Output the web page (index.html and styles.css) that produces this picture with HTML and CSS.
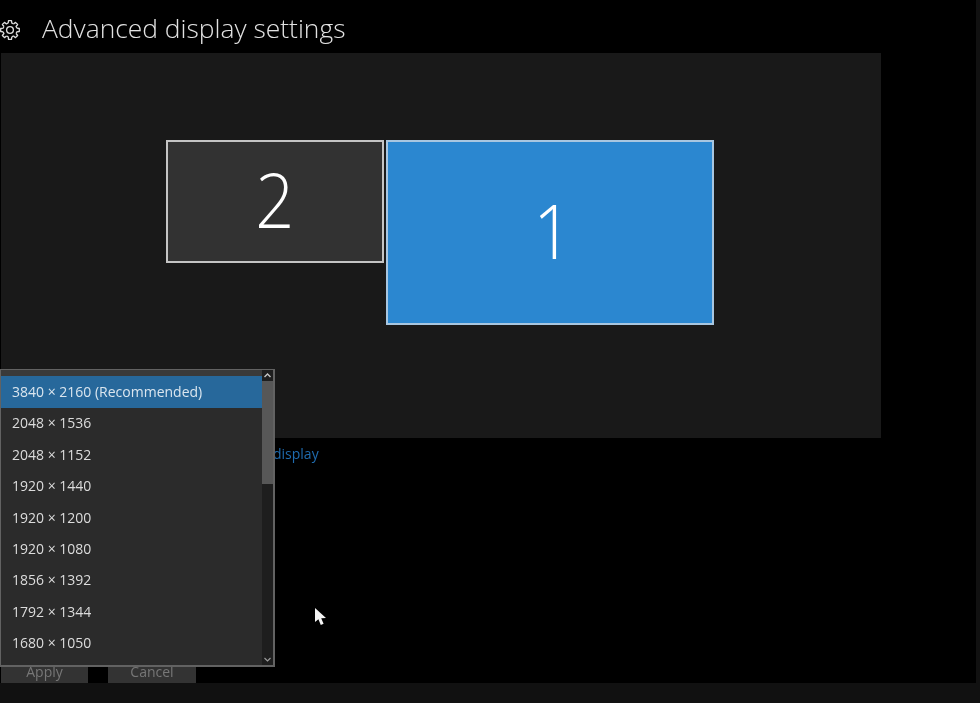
FILE: index.html
```html
<!DOCTYPE html>
<html lang="en">
<head>
<meta charset="utf-8">
<title>Advanced display settings</title>
<link rel="stylesheet" href="styles.css">
</head>
<body>
<div class="screen">
  <div class="upper">
    <main class="content">
      <header class="header">
        <svg class="gear" width="20" height="20" viewBox="-10 -10 20 20" aria-hidden="true">
          <defs><path id="tooth" d="M-1.81 -6.76L-1.49 -9.3L1.49 -9.3L1.81 -6.76A7 7 0 0 1 3.5 -6.06"/></defs>
          <g fill="none" stroke="#dcdcdc" stroke-width="1.3" stroke-linejoin="round">
            <use href="#tooth"/>
            <use href="#tooth" transform="rotate(45)"/>
            <use href="#tooth" transform="rotate(90)"/>
            <use href="#tooth" transform="rotate(135)"/>
            <use href="#tooth" transform="rotate(180)"/>
            <use href="#tooth" transform="rotate(225)"/>
            <use href="#tooth" transform="rotate(270)"/>
            <use href="#tooth" transform="rotate(315)"/>
            <circle r="3.4"/>
          </g>
        </svg>
        <h1 class="title">Advanced display settings</h1>
      </header>
      <section class="arrangement">
        <div class="monitor monitor-two"><span class="digit">2</span></div>
        <div class="monitor monitor-one"><span class="digit digit-one">1</span></div>
      </section>
      <div class="link-row"><a class="link">display</a></div>
      <div class="actions">
        <button class="btn">Apply</button>
        <button class="btn">Cancel</button>
      </div>
    </main>
    <div class="edge"></div>
  </div>
  <div class="footer"></div>

  <div class="dropdown">
    <div class="dropdown-lip"></div>
    <div class="dropdown-body">
      <ul class="options">
        <li class="option selected">3840 × 2160 (Recommended)</li>
        <li class="option">2048 × 1536</li>
        <li class="option">2048 × 1152</li>
        <li class="option">1920 × 1440</li>
        <li class="option">1920 × 1200</li>
        <li class="option">1920 × 1080</li>
        <li class="option">1856 × 1392</li>
        <li class="option">1792 × 1344</li>
        <li class="option">1680 × 1050</li>
      </ul>
      <div class="scrollbar">
        <svg class="arrow" width="11" height="11" viewBox="0 0 11 11" aria-hidden="true"><path d="M2.5 7L5.5 4L8.5 7" fill="none" stroke="#c4c4c4" stroke-width="1.4"/></svg>
        <div class="thumb"></div>
        <div class="track"></div>
        <svg class="arrow" width="11" height="11" viewBox="0 0 11 11" aria-hidden="true"><path d="M2.5 4L5.5 7L8.5 4" fill="none" stroke="#9a9a9a" stroke-width="1.2"/></svg>
      </div>
    </div>
  </div>

  <svg class="cursor" width="14" height="20" viewBox="0 0 14 20" aria-hidden="true"><path d="M1 1L1 15L4.4 12.2L6.8 18L9.6 16.8L7.2 11.2L12 11Z" fill="#f4f4f4"/></svg>
</div>
</body>
</html>
```
FILE: styles.css
```css
* { box-sizing: border-box; }
html, body { margin: 0; padding: 0; background: #000; }
body { width: 980px; height: 703px; overflow: hidden; font-family: "Open Sans", "Liberation Sans", sans-serif; }
.screen { position: relative; width: 980px; height: 703px; display: flex; flex-direction: column; filter: blur(0.4px); }
.upper { flex: 1; display: flex; min-height: 0; }
.content { flex: 1; display: flex; flex-direction: column; min-width: 0; }
.edge { width: 4px; background: #111; }
.footer { height: 20px; background: #111; }

.header { height: 53px; display: flex; align-items: center; gap: 22px; }
.gear { flex: none; margin-top: 6px; }
.title { margin: 3px 0 0; font-size: 26.4px; font-weight: 300; color: #e2e2e2; white-space: nowrap; line-height: 34px; }

.arrangement { position: relative; width: 880px; height: 385px; margin-left: 1px; background: #191919; }
.monitor { position: absolute; display: flex; align-items: center; justify-content: center; border: 2px solid #c4c4c4; color: #fff; }
.monitor-two { left: 165px; top: 87px; width: 218px; height: 123px; background: #323232; }
.monitor-one { left: 385px; top: 87px; width: 328px; height: 185px; background: #2b87d0; border-color: #a8c6e0; }
.digit { font-size: 76px; font-weight: 300; line-height: 1; margin-bottom: 6px; transform: scaleX(0.9); }
.digit-one { margin-left: 5px; }

.link-row { padding: 4px 0 0 273px; height: 32px; }
.link { font-size: 14px; line-height: 20px; color: #1f6cb0; }

.actions { margin-top: auto; display: flex; gap: 20px; padding-left: 1px; }
.btn { width: 87px; height: 28px; border: 0; padding: 5px 0 0; background: #333; color: #777; font: 14px/20px "Open Sans", "Liberation Sans", sans-serif; }
.btn + .btn { width: 88px; }

.dropdown { position: absolute; left: 0; top: 369px; width: 275px; height: 298px; display: flex; flex-direction: column; background: #2b2b2b; border: 1px solid #626262; border-width: 1px 2px 2px 1px; }
.dropdown-lip { height: 7px; background: #3a3a3a; }
.dropdown-body { flex: 1; display: flex; min-height: 0; }
.options { flex: 1; margin: -1px 0 0; padding: 0; list-style: none; min-width: 0; overflow: hidden; }
.option { height: 31.4px; line-height: 29.4px; padding-left: 11px; font-size: 14px; color: #dcdcdc; white-space: nowrap; }
.selected { height: 32.4px; padding-top: 1px; background: #27689b; color: #dbe6ef; }

.scrollbar { width: 11px; margin-top: -7px; display: flex; flex-direction: column; background: #1e1e1e; }
.arrow { flex: none; display: block; }
.thumb { height: 103px; background: #575757; }
.track { flex: 1; }

.cursor { position: absolute; left: 314px; top: 607px; }
```
